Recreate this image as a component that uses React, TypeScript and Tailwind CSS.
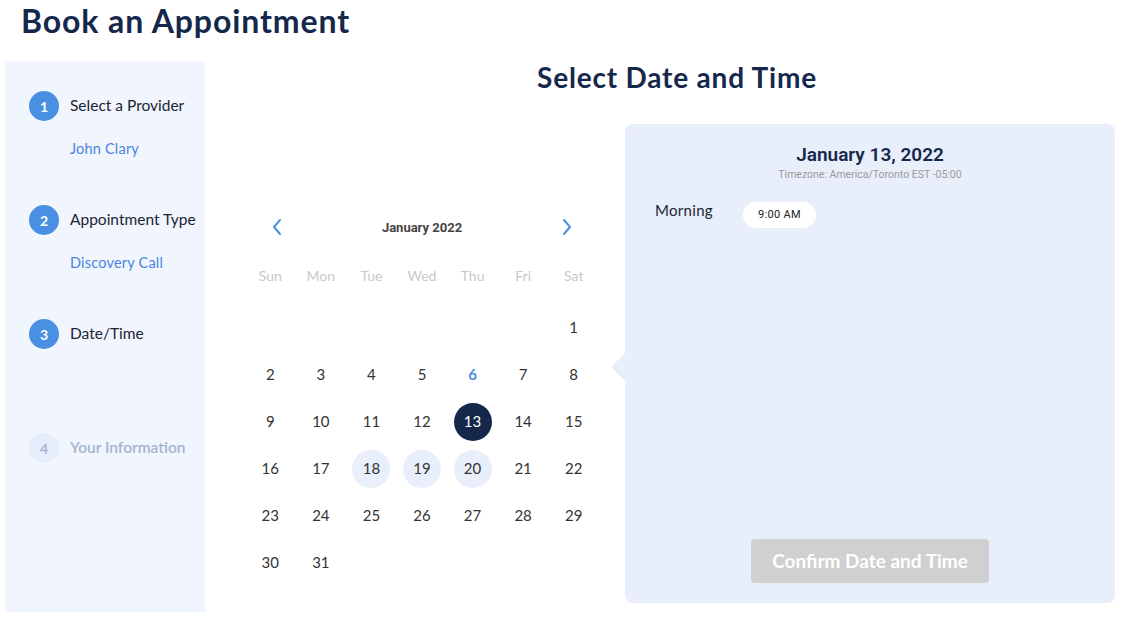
import React from "react";

const navy = "text-[#15284b]";

function Step({ n, label, sub, disabled }: { n: number; label: string; sub?: string; disabled?: boolean }) {
  return (
    <div className="h-[114px]">
      <div className="flex items-center">
        <div
          className={
            disabled
              ? "w-[30px] h-[30px] rounded-full bg-[#e6eefb] text-[#a3b3cf] flex items-center justify-center text-[14px] font-bold"
              : "w-[30px] h-[30px] rounded-full bg-[#4a90e2] text-white flex items-center justify-center text-[14px] font-bold"
          }
        >
          {n}
        </div>
        <div
          className={
            disabled
              ? "ml-[11px] text-[15.5px] font-semibold text-[#a7b4cf]"
              : "ml-[11px] text-[15.5px] text-[#1d2433]"
          }
        >
          {label}
        </div>
      </div>
      {sub && <div className="ml-[41px] mt-[17px] text-[14.5px] text-[#4a86de] tracking-[0.2px]">{sub}</div>}
    </div>
  );
}

export default function App() {
  const weekdays = ["Sun", "Mon", "Tue", "Wed", "Thu", "Fri", "Sat"];
  const cells: (number | null)[] = [null, null, null, null, null, null];
  for (let i = 1; i <= 31; i++) cells.push(i);
  while (cells.length % 7) cells.push(null);

  return (
    <div className="w-[1144px] h-[628px] bg-white overflow-hidden" style={{ fontFamily: "Lato, 'Noto Sans', sans-serif" }}>
      <div className="h-[61px] pl-[21px] pt-[1px]">
        <h1 className={`text-[32px] font-bold ${navy} leading-[40px] tracking-[0.9px]`}>Book an Appointment</h1>
      </div>
      <div className="flex">
        <div className="ml-[5px] w-[200px] h-[551px] bg-[#f0f5fe] pl-[24px] pt-[30px]">
          <Step n={1} label="Select a Provider" sub="John Clary" />
          <Step n={2} label="Appointment Type" sub="Discovery Call" />
          <Step n={3} label="Date/Time" />
          <Step n={4} label="Your Information" disabled />
        </div>
        <div className="flex-1 flex flex-col">
          <div className={`text-center text-[28px] font-bold ${navy} leading-[32px] tracking-[0.8px] pl-[5px]`}>Select Date and Time</div>
          <div className="flex mt-[31px]">
            <div className="ml-[40px] w-[354px] mt-[88px]">
              <div className="flex items-center justify-between px-[26px] h-[30px]">
                <svg width="12" height="18" viewBox="0 0 12 18" fill="none">
                  <path d="M9 2 L3 9 L9 16" stroke="#4a8fe0" strokeWidth="2" strokeLinecap="round" strokeLinejoin="round" />
                </svg>
                <div className="text-[13px] font-bold text-[#444] mt-[1px]" style={{ fontFamily: "Roboto, 'Liberation Sans', sans-serif" }}>January 2022</div>
                <svg width="12" height="18" viewBox="0 0 12 18" fill="none">
                  <path d="M3 2 L9 9 L3 16" stroke="#4a8fe0" strokeWidth="2" strokeLinecap="round" strokeLinejoin="round" />
                </svg>
              </div>
              <div className="grid grid-cols-7 mt-[24px]">
                {weekdays.map((d) => (
                  <div key={d} className="text-center text-[14px] text-[#c9c9c9] h-[20px] leading-[20px]">{d}</div>
                ))}
              </div>
              <div className="grid grid-cols-7 mt-[17px]">
                {cells.map((d, i) => {
                  let cls = "w-[38px] h-[38px] rounded-full flex items-center justify-center text-[15px] text-[#333]";
                  if (d === 13) cls = "w-[38px] h-[38px] rounded-full flex items-center justify-center text-[15px] text-white bg-[#15284b]";
                  else if (d === 18 || d === 19 || d === 20)
                    cls = "w-[38px] h-[38px] rounded-full flex items-center justify-center text-[15px] text-[#333] bg-[#e8eefa]";
                  else if (d === 6) cls = "w-[38px] h-[38px] rounded-full flex items-center justify-center text-[15px] font-bold text-[#4a8fe0]";
                  return (
                    <div key={i} className={i < 7 ? "h-[48px] flex items-center justify-center" : "h-[47px] flex items-center justify-center"}>
                      {d !== null && <div className={cls}>{d}</div>}
                    </div>
                  );
                })}
              </div>
            </div>
            <div className="ml-[26px] relative w-[490px] h-[479px] bg-[#e8eefa] rounded-[8px]">
              <div className="absolute left-[-14px] top-[229px] w-0 h-0 border-y-[14px] border-y-transparent border-r-[14px] border-r-[#e8eefa]" />
              <div className="flex flex-col items-center pt-[19px]" style={{ fontFamily: "Roboto, 'Liberation Sans', sans-serif" }}>
                <div className={`text-[19px] font-semibold ${navy} leading-[24px]`}>January 13, 2022</div>
                <div className="text-[10.5px] text-[#9a9a9a] leading-[14px] mt-[1px]">Timezone: America/Toronto EST -05:00</div>
              </div>
              <div className="flex items-center pl-[30px] mt-[20px]">
                <div className="w-[88px] text-[15px] text-[#1d2433] tracking-[0.3px] -mt-[9px]">Morning</div>
                <div className="w-[73px] h-[26px] rounded-full bg-white flex items-center justify-center text-[11px] text-[#222] tracking-[0.3px]" style={{ fontFamily: "Roboto, 'Liberation Sans', sans-serif" }}>
                  9:00 AM
                </div>
              </div>
              <div className="absolute left-[126px] top-[415px] w-[238px] h-[44px] rounded-[4px] bg-[#d0d0d0] flex items-center justify-center text-white text-[19px] font-bold">
                Confirm Date and Time
              </div>
            </div>
          </div>
        </div>
      </div>
    </div>
  );
}
